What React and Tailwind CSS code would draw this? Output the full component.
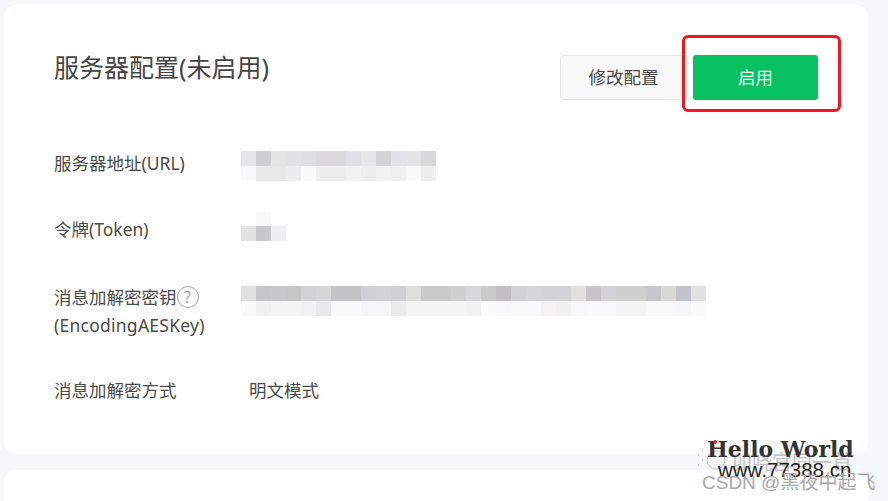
const font = "font-['Noto_Sans','Noto_Sans_CJK_SC',sans-serif]";

// mosaic blocks that hide the real values
const urlBlur = [
  ["bg-[#e6e6e8]", "bg-[#cfcfd1]", "bg-[#e4e4e4]", "bg-[#e2e2e4]", "bg-[#dfdfe2]", "bg-[#dad8db]", "bg-[#dad8db]", "bg-[#e0e1e4]", "bg-[#e6e6e8]", "bg-[#d4d4d6]", "bg-[#e2e2e6]", "bg-[#e4e4e6]", "bg-[#d8d8d8]"],
  ["bg-[#f8f8f8]", "bg-[#e9e9ea]", "bg-[#e8e8e8]", "bg-[#ececee]", "bg-[#fbfbfb]", "bg-[#eeeeef]", "bg-[#eeeeef]", "bg-[#f2f2f3]", "bg-[#eeeeef]", "bg-[#f3f2f2]", "bg-[#f0eff0]", "bg-[#f9f9f9]", "bg-[#eeeeee]"],
];

const tokenBlur = [
  ["bg-white", "bg-[#f8f8f8]", "bg-white"],
  ["bg-[#e2e2e2]", "bg-[#c8c8cb]", "bg-[#eeeef0]"],
];

const keyBlur = [
  ["bg-[#e0e0e0]", "bg-[#c6c6ca]", "bg-[#c8c8ca]", "bg-[#c6c6c4]", "bg-[#d2d2d4]", "bg-[#d6d6d6]", "bg-[#c4c4c6]", "bg-[#c4c4c6]", "bg-[#d0d0d4]", "bg-[#d4d4d6]", "bg-[#d0d0d2]", "bg-[#dededc]", "bg-[#cacac8]", "bg-[#cacac8]", "bg-[#cfcfcd]", "bg-[#d6d8da]", "bg-[#cacaca]", "bg-[#c2c0c6]", "bg-[#d2d2d4]", "bg-[#d6d6d8]", "bg-[#d4d4d8]", "bg-[#d4d4d8]", "bg-[#e0e0de]", "bg-[#c6c4c8]", "bg-[#d4d4d8]", "bg-[#cecece]", "bg-[#cecece]", "bg-[#c6c6ca]", "bg-[#d8d8d6]", "bg-[#c0c4ca]", "bg-[#e0e2e4]"],
  ["bg-[#fafafa]", "bg-[#f0f0f0]", "bg-[#f4f4f4]", "bg-[#f4f4f4]", "bg-[#f2f2f4]", "bg-[#e8e8ea]", "bg-[#fafafa]", "bg-[#fafafa]", "bg-[#f6f6f8]", "bg-[#f6f6f6]", "bg-[#eaeaea]", "bg-[#f4f4f4]", "bg-[#f4f4f4]", "bg-[#f4f4f4]", "bg-[#f4f4f4]", "bg-[#f2f2f2]", "bg-[#fbfbfb]", "bg-[#f8f8fb]", "bg-[#fafafa]", "bg-[#fafafc]", "bg-[#f4f2f2]", "bg-[#f0f0f0]", "bg-[#f8f8f8]", "bg-[#fafafc]", "bg-[#fafafc]", "bg-[#f4f4f4]", "bg-[#f4f4f4]", "bg-[#f8f8f8]", "bg-[#f8f8f8]", "bg-[#f6f6f8]", "bg-[#fafafa]"],
];

function Mosaic({ rows }) {
  return (
    <div className="flex flex-col">
      {rows.map((row, i) => (
        <div key={i} className="flex">
          {row.map((c, j) => (
            <div key={j} className={`w-[15px] h-[15px] ${c}`} />
          ))}
        </div>
      ))}
    </div>
  );
}

function Watermark() {
  return (
    <div className="absolute left-[697px] top-[433px] w-[180px] h-[62px]">
      <svg className="absolute left-[0px] top-[14px]" width="40" height="24" viewBox="0 0 40 24" fill="none">
        <circle cx="19" cy="13" r="9" stroke="#c4c4c4" strokeWidth="1" />
        <path d="M1 8h2M5 4h2M1 18h3M5 13l2-1" stroke="#9a9a9a" strokeWidth="1" strokeDasharray="1 2" />
      </svg>
      <div className="absolute left-[35px] top-[17px] text-[20px] leading-[24px] text-[#c2c2c2] whitespace-nowrap font-['Noto_Sans_CJK_SC',sans-serif]">
        卯哓宫同一首
      </div>
      <div className="absolute left-[10px] top-[2px] text-[22px] leading-[28px] font-bold text-[#333333] whitespace-nowrap font-['DejaVu_Serif',serif]">
        Hello World
      </div>
      <div className="absolute left-[16px] top-[7px] w-[4px] h-[4px] rounded-full bg-[#e8202a]" />
      <div className="absolute left-[21px] top-[26px] text-[20.5px] leading-[22px] text-[#1c1c1c] whitespace-nowrap font-['Liberation_Sans',sans-serif]">
        www.77388.cn
      </div>
      <div className="absolute left-[5px] top-[39px] text-[19px] leading-[22px] text-[#a8a8a8] whitespace-nowrap font-['Liberation_Sans','Noto_Sans_CJK_SC',sans-serif]">
        CSDN @黑夜中起飞
      </div>
    </div>
  );
}

export default function App() {
  return (
    <div className={`relative w-[888px] h-[501px] overflow-hidden bg-[#f6f7f9] pt-[5px] pl-[4px] text-[#4a4a4a] ${font}`}>
      <div className="w-[864px] h-[449px] bg-white rounded-[12px] pl-[50px] pr-[50px] flex flex-col">
        <div className="flex justify-between pt-[50px]">
          <h1 className="text-[25px] leading-[28px] -mt-[2px] font-normal text-[#444444]">服务器配置(未启用)</h1>
          <div className="flex gap-[6px] text-[17.5px]">
            <button className="w-[127px] h-[45px] border border-[#e7e7e9] bg-[#f8f8f9] rounded-[3px] text-[#4a4a4a]">修改配置</button>
            <button className="w-[125px] h-[45px] bg-[#07c160] rounded-[3px] text-[#e6fff0]">启用</button>
          </div>
        </div>

        <div className="flex text-[17.5px] leading-[28px] mt-[50px]">
          <div className="w-[187px] -mt-[1px]">服务器地址(URL)</div>
          <div className="pt-[1px]"><Mosaic rows={urlBlur} /></div>
        </div>

        <div className="flex text-[17.5px] leading-[28px] mt-[30px]">
          <div className="w-[187px] pt-[4px]">令牌(Token)</div>
          <div><Mosaic rows={tokenBlur} /></div>
        </div>

        <div className="flex text-[17.5px] leading-[28px] mt-[40px]">
          <div className="w-[187px]">
            <div className="flex items-center">
              消息加解密密钥
              <span className="w-[22px] h-[22px] rounded-full border border-[#a8a8a8] text-[#a0a0a0] text-[16px] leading-none flex items-center justify-center">?</span>
            </div>
            <div className="tracking-[0.25px]">(EncodingAESKey)</div>
          </div>
          <div className="pt-[3px]"><Mosaic rows={keyBlur} /></div>
        </div>

        <div className="flex text-[17.5px] leading-[28px] mt-[37px]">
          <div className="w-[195px]">消息加解密方式</div>
          <div>明文模式</div>
        </div>
      </div>

      <div className="w-[864px] h-[40px] mt-[16px] bg-white rounded-t-[12px]" />

      {/* red marker drawn over the screenshot */}
      <div className="absolute left-[682px] top-[35px] w-[159px] h-[77px] border-[3px] border-[#f8141a] rounded-[6px]" />
      <Watermark />
    </div>
  );
}
